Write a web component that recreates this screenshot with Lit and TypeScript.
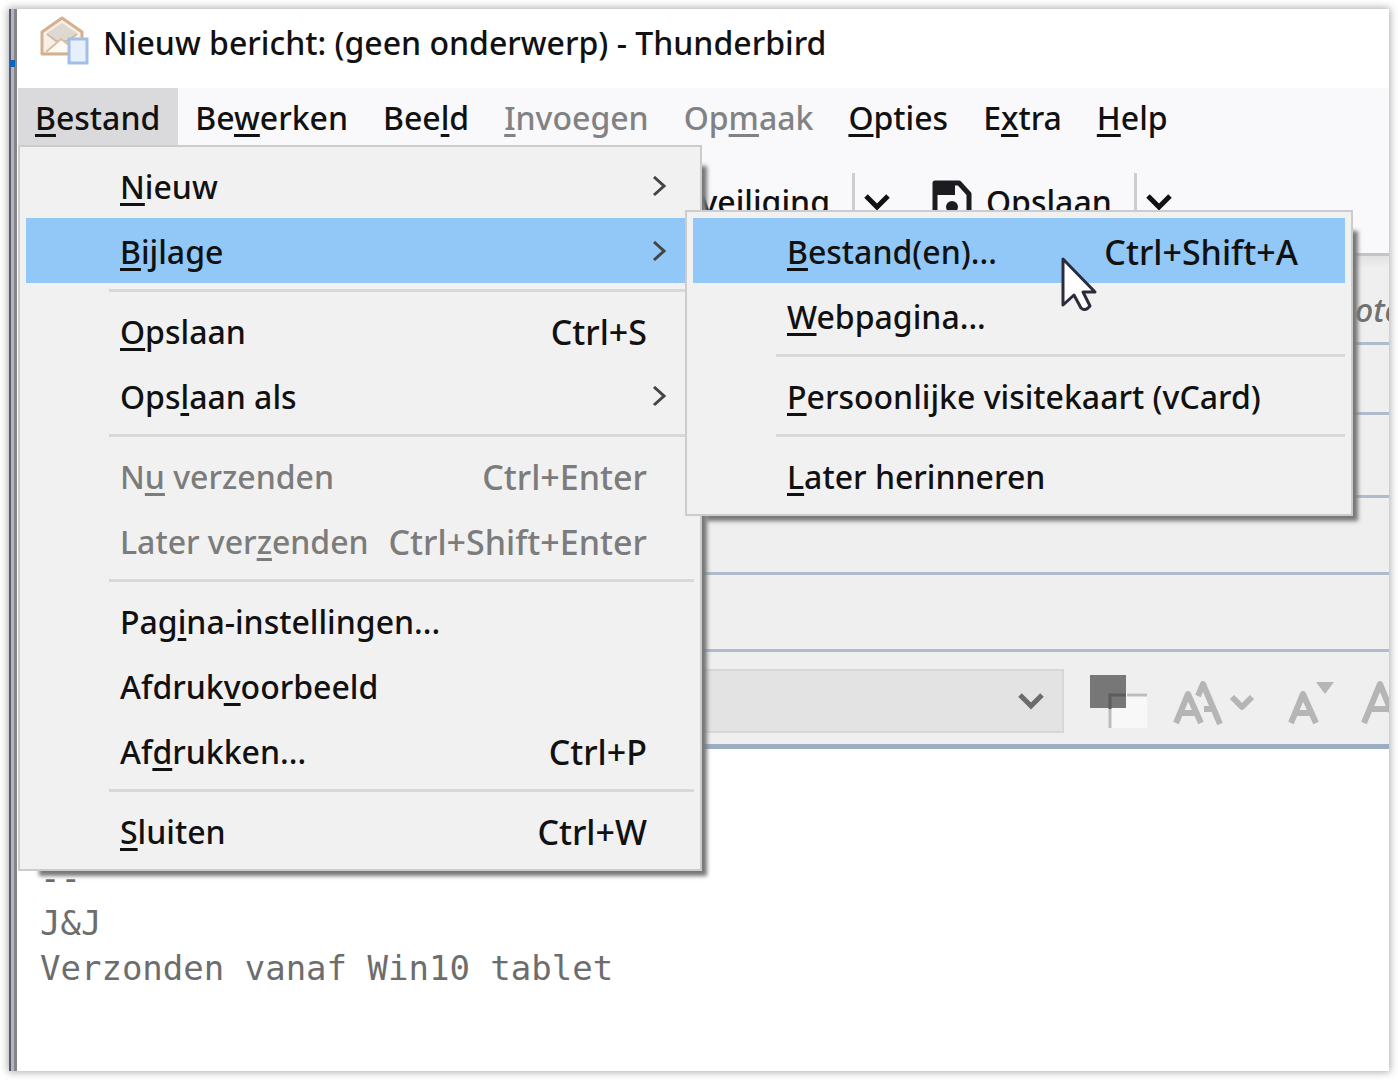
import { LitElement, html, css, svg, nothing } from "lit";
import { customElement, property } from "lit/decorators.js";

interface Entry {
  label?: string;
  shortcut?: string;
  sub?: boolean;
  open?: boolean;
  disabled?: boolean;
}

/** Splits a label such as "Be_werken" into text with its access key underlined. */
const mnemonic = (label: string) => {
  const at = label.indexOf("_");
  if (at < 0) return html`${label}`;
  return html`${label.slice(0, at)}<u>${label[at + 1]}</u>${label.slice(at + 2)}`;
};

const chevronDown = (cls: string) => html`<svg class=${cls} viewBox="0 0 26 18" aria-hidden="true">
  <path d="M2 3 L13 14 L24 3" fill="none" stroke="currentColor" stroke-width="5" />
</svg>`;

const fileMenu: Entry[] = [
  { label: "_Nieuw", sub: true },
  { label: "_Bijlage", sub: true, open: true },
  {},
  { label: "_Opslaan", shortcut: "Ctrl+S" },
  { label: "Ops_laan als", sub: true },
  {},
  { label: "N_u verzenden", shortcut: "Ctrl+Enter", disabled: true },
  { label: "Later ver_zenden", shortcut: "Ctrl+Shift+Enter", disabled: true },
  {},
  { label: "Pag_ina-instellingen..." },
  { label: "Afdruk_voorbeeld" },
  { label: "Af_drukken...", shortcut: "Ctrl+P" },
  {},
  { label: "_Sluiten", shortcut: "Ctrl+W" },
];

const attachMenu: Entry[] = [
  { label: "_Bestand(en)...", shortcut: "Ctrl+Shift+A", open: true },
  { label: "_Webpagina..." },
  {},
  { label: "_Persoonlijke visitekaart (vCard)" },
  {},
  { label: "_Later herinneren" },
];

const menus = [
  { label: "_Bestand", open: true },
  { label: "Be_werken" },
  { label: "Bee_ld" },
  { label: "_Invoegen", disabled: true },
  { label: "Op_maak", disabled: true },
  { label: "_Opties" },
  { label: "E_xtra" },
  { label: "_Help" },
] as Entry[];

@customElement("popup-menu")
export class PopupMenu extends LitElement {
  @property({ attribute: false }) items: Entry[] = [];

  static styles = css`
    :host {
      display: block;
      box-sizing: border-box;
      padding: 6px;
      border: 2px solid #cccccc;
      background: #f1f1f1;
      box-shadow: 13px 13px 4px -8px #777;
    }
    .item {
      display: flex;
      align-items: center;
      width: 100%;
      height: 65px;
      box-sizing: border-box;
      padding: 2px 22px 0 94px;
      border: 0;
      background: none;
      color: #111;
      font: inherit;
      text-align: left;
      white-space: nowrap;
    }
    .open {
      background: #91c8f7;
    }
    .item:disabled {
      color: #7c7c7c;
    }
    .shortcut {
      margin-left: auto;
      padding-right: 25px;
      font-size: 34px;
    }
    .arrow {
      width: 16px;
      height: 22px;
      margin-left: auto;
      margin-right: 5px;
      color: #444;
    }
    hr {
      margin: 6px 0 6px 83px;
      border: 0;
      height: 3px;
      background: #d8d8d8;
    }
    u {
      text-decoration-thickness: 3px;
      text-underline-offset: 4px;
      text-decoration-skip-ink: none;
    }
  `;

  render() {
    return this.items.map((e) =>
      e.label
        ? html`<button class="item ${e.open ? "open" : ""}" role="menuitem" ?disabled=${e.disabled}>
            <span>${mnemonic(e.label)}</span>
            ${e.shortcut ? html`<span class="shortcut">${e.shortcut}</span>` : nothing}
            ${e.sub
              ? html`<svg class="arrow" viewBox="0 0 16 22" aria-hidden="true">
                  <path d="M3 1 L13 10 L3 19" fill="none" stroke="currentColor" stroke-width="3" />
                </svg>`
              : nothing}
          </button>`
        : html`<hr />`
    );
  }
}

@customElement("app-root")
export class AppRoot extends LitElement {
  static styles = css`
    :host {
      display: block;
      box-sizing: border-box;
      min-height: 100vh;
      padding: 9px;
      background: #fff;
      font-family: "Noto Sans", "Open Sans", sans-serif;
      font-size: 32px;
      font-weight: 500;
      line-height: 44px;
      color: #111;
    }
    .window {
      position: relative;
      display: flex;
      flex-direction: column;
      min-height: calc(100vh - 18px);
      box-sizing: border-box;
      padding-left: 9px;
      background: linear-gradient(90deg, #555a70 0 2px, #b4b4bd 2px 5px, #858589 5px 8px, #fff 8px);
      box-shadow: 0 0 8px 1px #aaa;
    }
    .edge-mark {
      position: absolute;
      left: 1px;
      top: 51px;
      width: 5px;
      height: 7px;
      background: #1560b8;
    }
    .title {
      display: flex;
      align-items: flex-start;
      gap: 14px;
      height: 79px;
      box-sizing: border-box;
      padding: 7px 0 0 21px;
    }
    h1 {
      margin: 0;
      padding-top: 5px;
      font: inherit;
      white-space: nowrap;
    }
    .mail {
      width: 50px;
      height: 50px;
    }
    .menubar {
      position: relative;
      display: flex;
      height: 57px;
      background: #f9f9fb;
      white-space: nowrap;
    }
    .menubar button {
      padding: 2px 18px 0 17px;
      border: 0;
      background: none;
      color: inherit;
      font: inherit;
    }
    .menubar button:disabled {
      color: #828284;
    }
    .menubar .active {
      background: #dadadc;
    }
    u {
      text-decoration-thickness: 3px;
      text-underline-offset: 4px;
      text-decoration-skip-ink: none;
    }
    .file-menu,
    .attach-menu {
      position: absolute;
      z-index: 2;
    }
    .file-menu {
      left: 0;
      top: 57px;
      width: 684px;
    }
    .attach-menu {
      left: 667px;
      top: 122px;
      width: 668px;
      z-index: 3;
    }
    .pointer {
      position: absolute;
      z-index: 4;
      left: 1042px;
      top: 167px;
      width: 40px;
      height: 60px;
    }
    .toolbar {
      display: flex;
      align-items: center;
      height: 111px;
      box-sizing: border-box;
      padding-top: 6px;
      background: #f9f9fb;
      border-bottom: 3px solid #c4c4c6;
    }
    .toolbar button {
      display: flex;
      align-items: center;
      gap: 14px;
      padding: 0;
      border: 0;
      background: none;
      color: inherit;
      font: inherit;
    }
    .toolbar .security {
      width: 812px;
      justify-content: flex-end;
    }
    .divider {
      width: 3px;
      height: 58px;
      margin: 0 9px 0 22px;
      background: #cdcdd0;
    }
    .down {
      width: 26px;
      height: 18px;
    }
    .disk {
      width: 40px;
      height: 44px;
    }
    .toolbar .save {
      margin-left: 42px;
    }
    .field {
      box-sizing: border-box;
      height: 77px;
      background: #efefef;
      border-bottom: 3px solid #aebccd;
    }
    .from {
      display: flex;
      justify-content: flex-end;
      height: 89px;
      padding-top: 32px;
      background: linear-gradient(#e2e2e2, #efefef 12px);
    }
    .account {
      width: 34px;
      overflow: hidden;
      color: #707070;
      font-style: italic;
    }
    .to {
      height: 70px;
    }
    .cc {
      height: 83px;
    }
    .format {
      display: flex;
      align-items: center;
      height: 97px;
      box-sizing: border-box;
      padding-top: 6px;
      overflow: hidden;
      background: #efefef;
      border-bottom: 5px solid #9badc2;
    }
    .picker {
      position: relative;
      flex: none;
      display: flex;
      align-items: center;
      width: 1046px;
      height: 64px;
      margin-right: 25px;
    }
    select {
      appearance: none;
      width: 100%;
      height: 100%;
      border: 2px solid #d7d7d7;
      border-radius: 0;
      background: #e3e3e3;
      opacity: 1;
      font: inherit;
    }
    .picker .down {
      position: absolute;
      right: 20px;
      color: #6c6c6c;
    }
    .tools {
      flex: none;
      width: 310px;
      height: 60px;
      color: #b5b5b5;
    }
    textarea {
      flex: 1;
      min-height: 240px;
      margin: 0;
      padding: 17px 22px;
      border: 0;
      outline: 0;
      resize: none;
      background: transparent;
      color: #6d6d6d;
      font: 34px/45px "DejaVu Sans Mono", monospace;
    }
  `;

  private mailIcon() {
    return svg`<svg class="mail" viewBox="0 0 50 50" aria-hidden="true">
      <path d="M3 16 L23 2 L43 16 V38 H3 Z" fill="#f8f0e6" stroke="#d5b090" stroke-width="3" stroke-linejoin="round"/>
      <path d="M8 17 L23 7 L38 17 L28 25 H17 Z" fill="#ded8d0"/>
      <path d="M8 18 L17 25 H28 L38 18" fill="none" stroke="#cdbba8" stroke-width="2"/>
      <path d="M6 36 L22 22 L38 36 Z" fill="#fffaf2"/>
      <path d="M7 36 L22 23 L30 29" fill="none" stroke="#d8bea4" stroke-width="2"/>
      <rect x="30" y="23" width="18" height="24" fill="#e6effc" stroke="#a3bee4" stroke-width="3"/>
    </svg>`;
  }

  render() {
    return html`
      <main class="window">
        <div class="edge-mark"></div>
        <header class="title">
          ${this.mailIcon()}
          <h1>Nieuw bericht: (geen onderwerp) - Thunderbird</h1>
        </header>
        <nav class="menubar">
          ${menus.map(
            (m) => html`<button class=${m.open ? "active" : ""} ?disabled=${m.disabled}>${mnemonic(m.label!)}</button>`
          )}
          <popup-menu class="file-menu" role="menu" .items=${fileMenu}></popup-menu>
          <popup-menu class="attach-menu" role="menu" .items=${attachMenu}></popup-menu>
          <svg class="pointer" viewBox="0 0 40 60" aria-hidden="true">
            <path
              d="M3 4 V50 L14 40 L21 53 Q25 57 30 51 L23 37 H35 Z"
              fill="#fff"
              stroke="#2c2c3c"
              stroke-width="3"
              stroke-linejoin="round"
            />
          </svg>
        </nav>
        <div class="toolbar">
          <button class="security">Beveiliging</button>
          <span class="divider"></span>
          <button aria-label="Beveiligingsopties">${chevronDown("down")}</button>
          <button class="save">
            <svg class="disk" viewBox="0 0 40 44" aria-hidden="true">
              <path d="M3 3 H27 L37 14 V41 H3 Z" fill="none" stroke="#1c1c20" stroke-width="5" stroke-linejoin="round" />
              <path d="M3 3 H23 V15 H3 Z" fill="#1c1c20" />
              <circle cx="20" cy="27" r="6" fill="#1c1c20" />
            </svg>
            Opslaan
          </button>
          <span class="divider"></span>
          <button aria-label="Opslagopties">${chevronDown("down")}</button>
        </div>
        <div class="field from"><span class="account">ote</span></div>
        <div class="field to"></div>
        <div class="field cc"></div>
        <div class="field"></div>
        <div class="field"></div>
        <div class="format">
          <label class="picker">
            <select disabled aria-label="Lettertype"></select>
            ${chevronDown("down")}
          </label>
          <svg class="tools" viewBox="0 0 310 60" aria-hidden="true">
            <rect x="20" y="22" width="38" height="35" fill="#f8f8f8" />
            <rect x="1" y="4" width="36" height="33" fill="#777" />
            <path d="M21 38 V24 H37" fill="none" stroke="#5c5c5c" stroke-width="3" />
            <path d="M21 38 V57 M38 24 H58" fill="none" stroke="#bdbdbd" stroke-width="3" />
            <g fill="none" stroke="currentColor" stroke-width="6" stroke-linejoin="round">
              <path d="M87 52 L99 23 L112 52 M92 42 H108" />
              <path d="M109 25 L114 13 L131 53 M115 38 H124" />
              <path d="M143 26 L153 36 L163 26" />
              <path d="M202 52 L214 23 L227 52 M207 42 H223" />
              <path d="M275 52 L291 13 L307 52 M281 38 H302" />
            </g>
            <path d="M227 11 H245 L236 23 Z" fill="currentColor" />
          </svg>
        </div>
        <textarea aria-label="Berichttekst" spellcheck="false" .value=${"\n\n--\nJ&J\nVerzonden vanaf Win10 tablet"}></textarea>
      </main>
    `;
  }
}
